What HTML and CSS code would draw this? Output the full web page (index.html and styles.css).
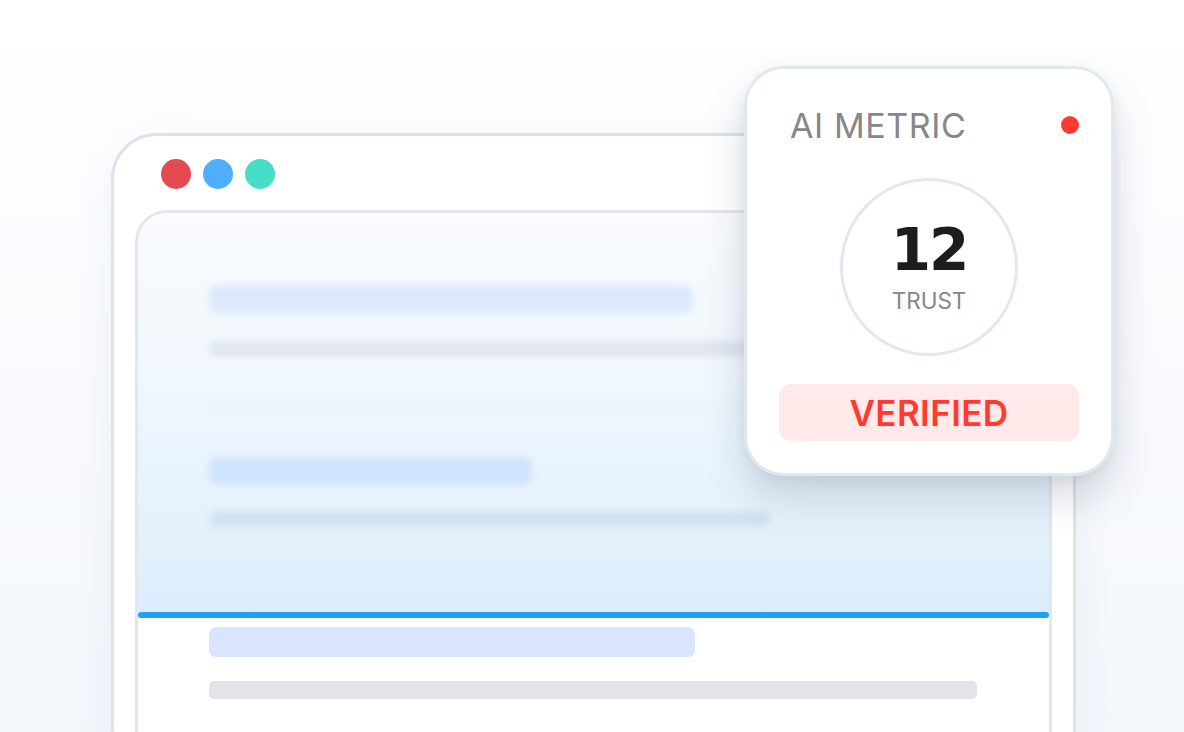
FILE: index.html
```html
<!DOCTYPE html>
<html lang="en">
<head>
<meta charset="utf-8">
<title>AI Metric</title>
<link rel="stylesheet" href="styles.css">
</head>
<body>
<div class="stage">
  <div class="window">
    <div class="dots">
      <span class="dot dot-red"></span>
      <span class="dot dot-blue"></span>
      <span class="dot dot-teal"></span>
    </div>
    <div class="panel">
      <div class="scan">
        <div class="sbar sbar-blue sbar-1"></div>
        <div class="sbar sbar-gray sbar-2"></div>
        <div class="sbar sbar-faint sbar-3"></div>
        <div class="sbar sbar-blue2 sbar-4"></div>
        <div class="sbar sbar-gray2 sbar-5"></div>
      </div>
      <div class="scanline"></div>
      <div class="content">
        <div class="bar bar-blue"></div>
        <div class="bar bar-gray"></div>
      </div>
    </div>
  </div>

  <div class="card">
    <div class="card-head">
      <span class="card-title">AI METRIC</span>
      <span class="live-dot"></span>
    </div>
    <div class="ring">
      <span class="score">12</span>
      <span class="score-label">TRUST</span>
    </div>
    <div class="badge">VERIFIED</div>
  </div>
</div>
</body>
</html>
```

FILE: styles.css
```css
html, body {
  margin: 0;
  padding: 0;
}

body {
  width: 1184px;
  height: 732px;
  overflow: hidden;
  background: linear-gradient(180deg, #ffffff 0%, #fbfcfe 30%, #f3f7fc 100%);
  font-family: Inter, "Noto Sans", "Liberation Sans", sans-serif;
}

.stage {
  position: relative;
  box-sizing: border-box;
  height: 732px;
  overflow: hidden;
  padding: 133px 0 0 111px;
}

.window {
  box-sizing: border-box;
  width: 965px;
  height: 640px;
  border: 3px solid #dfe2e8;
  border-radius: 46px;
  background: #ffffff;
  padding: 23px 21px 0;
  box-shadow: 0 10px 40px rgba(40, 80, 140, 0.06);
}

.dots {
  display: flex;
  gap: 12px;
  padding-left: 26px;
}

.dot {
  width: 30px;
  height: 30px;
  border-radius: 50%;
}

.dot-red { background: #e54a50; }
.dot-blue { background: #4faefd; }
.dot-teal { background: #46dec7; }

.panel {
  margin-top: 21px;
  border: 3px solid #e5e6eb;
  border-bottom: none;
  border-radius: 32px 32px 0 0;
  height: 580px;
  overflow: hidden;
  background: #ffffff;
}

.scan {
  height: 399px;
  box-sizing: border-box;
  padding: 72px 0 0 71px;
  background: linear-gradient(180deg, #f9fbfe 0%, #f1f7fd 40%, #e5f2fc 75%, #daedfb 100%);
  display: flex;
  flex-direction: column;
  align-items: flex-start;
}

.sbar {
  border-radius: 8px;
  filter: blur(3px);
}

.sbar-1 { width: 484px; height: 28px; background: #dce9fd; }
.sbar-2 { width: 620px; height: 16px; margin-top: 28px; background: #dfe6ef; }
.sbar-3 { width: 560px; height: 4px; margin-top: 48px; background: #e9f0f8; }
.sbar-4 { width: 323px; height: 28px; margin-top: 48px; background: #d0e3fd; }
.sbar-5 { width: 562px; height: 16px; margin-top: 26px; background: #d1e3f1; }

.scanline {
  height: 6px;
  background: #1fa1f2;
  border-radius: 3px;
}

.content {
  padding: 9px 72px 0 71px;
  display: flex;
  flex-direction: column;
  gap: 24px;
}

.bar {
  border-radius: 7px;
}

.bar-blue {
  width: 486px;
  height: 30px;
  background: #d8e5fd;
}

.bar-gray {
  width: 768px;
  height: 18px;
  border-radius: 5px;
  background: #e4e3e9;
}

/* floating metric card */
.card {
  position: absolute;
  left: 744px;
  top: 66px;
  box-sizing: border-box;
  width: 370px;
  height: 410px;
  padding: 32px;
  border: 3px solid #e2e8f0;
  border-radius: 40px;
  background: #ffffff;
  box-shadow: 0 22px 40px rgba(40, 60, 90, 0.18), 0 4px 12px rgba(40, 60, 90, 0.06);
  display: flex;
  flex-direction: column;
  align-items: center;
}

.card-head {
  align-self: stretch;
  display: flex;
  align-items: center;
  justify-content: space-between;
  height: 48px;
  padding-left: 11px;
}

.card-title {
  font-size: 34px;
  font-weight: 400;
  color: #87868b;
  letter-spacing: 0.6px;
}

.live-dot {
  width: 18px;
  height: 18px;
  border-radius: 50%;
  background: #ff3b30;
}

.ring {
  box-sizing: border-box;
  width: 178px;
  height: 178px;
  margin-top: 29px;
  border: 3px solid #e2e8f0;
  border-radius: 50%;
  display: flex;
  flex-direction: column;
  align-items: center;
  justify-content: center;
}

.score {
  font-family: "DejaVu Sans", "Liberation Sans", sans-serif;
  font-size: 58px;
  font-weight: 700;
  line-height: 62px;
  color: #1d1d1f;
  letter-spacing: -2px;
}

.score-label {
  font-size: 22.5px;
  line-height: 28px;
  color: #86868b;
  margin-top: 6px;
}

.badge {
  margin-top: 28px;
  width: 300px;
  height: 57px;
  border-radius: 12px;
  background: #ffe9e9;
  color: #ff3b30;
  font-size: 35px;
  font-weight: 600;
  letter-spacing: 0.4px;
  display: flex;
  align-items: center;
  justify-content: center;
}
```
